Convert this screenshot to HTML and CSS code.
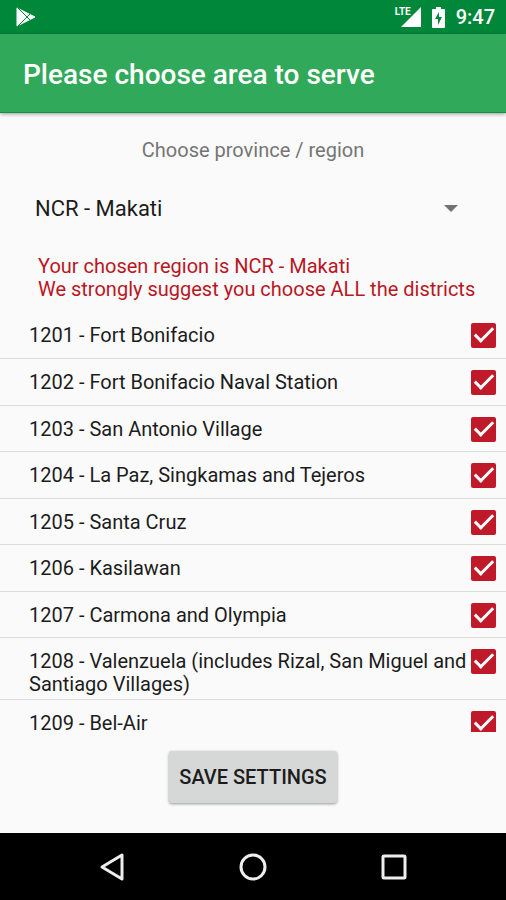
FILE: index.html
```html
<!DOCTYPE html>
<html lang="en">
<head>
<meta charset="utf-8">
<meta name="viewport" content="width=device-width, initial-scale=1">
<title>Please choose area to serve</title>
<link rel="stylesheet" href="styles.css">
</head>
<body>
<div class="screen">
  <div class="status-bar">
    <svg class="play-icon" width="20" height="20" viewBox="0 0 20 20" aria-hidden="true">
      <path d="M1 1 L19 10 L1 19 Z" fill="#fff" stroke="#fff" stroke-linejoin="round"/>
      <path d="M2 1 L14 13 M2 19 L14 7" stroke="#01873a" stroke-width="1" fill="none"/>
    </svg>
    <div class="status-right">
      <div class="signal">
        <span class="lte">LTE</span>
        <svg width="20" height="20" viewBox="0 0 20 20" aria-hidden="true"><path d="M20 0 V20 H0 Z" fill="#fff"/></svg>
      </div>
      <svg width="13" height="21" viewBox="0 0 13 21" aria-hidden="true">
        <path d="M4 0 H9 V2 H12 Q13 2 13 3 V20 Q13 21 12 21 H1 Q0 21 0 20 V3 Q0 2 1 2 H4 Z" fill="#fff"/>
        <path d="M7 5 L3 12 H6 V18 L10 10 H7 Z" fill="#01873a"/>
      </svg>
      <span class="clock">9:47</span>
    </div>
  </div>

  <header class="app-bar"><h1>Please choose area to serve</h1></header>

  <main class="content">
    <label class="region-label" for="region">Choose province / region</label>
    <div class="spinner">
      <select id="region"><option>NCR - Makati</option></select>
      <svg class="caret" width="14" height="7" viewBox="0 0 14 7" aria-hidden="true"><path d="M0 0 H14 L7 7 Z" fill="#727272"/></svg>
    </div>
    <p class="notice">Your chosen region is NCR - Makati<br>We strongly suggest you choose ALL the districts</p>

    <ul class="districts">
      <li><label for="d1201">1201 - Fort Bonifacio</label><input type="checkbox" id="d1201" checked></li>
      <li><label for="d1202">1202 - Fort Bonifacio Naval Station</label><input type="checkbox" id="d1202" checked></li>
      <li><label for="d1203">1203 - San Antonio Village</label><input type="checkbox" id="d1203" checked></li>
      <li><label for="d1204">1204 - La Paz, Singkamas and Tejeros</label><input type="checkbox" id="d1204" checked></li>
      <li><label for="d1205">1205 - Santa Cruz</label><input type="checkbox" id="d1205" checked></li>
      <li><label for="d1206">1206 - Kasilawan</label><input type="checkbox" id="d1206" checked></li>
      <li><label for="d1207">1207 - Carmona and Olympia</label><input type="checkbox" id="d1207" checked></li>
      <li><label for="d1208">1208 - Valenzuela (includes Rizal, San Miguel and Santiago Villages)</label><input type="checkbox" id="d1208" checked></li>
      <li><label for="d1209">1209 - Bel-Air</label><input type="checkbox" id="d1209" checked></li>
    </ul>

    <div class="actions"><button class="save" type="button">SAVE SETTINGS</button></div>
  </main>

  <nav class="nav-bar" aria-label="System">
    <button type="button" aria-label="Back"><svg width="28" height="30" viewBox="0 0 28 30"><path d="M24 3 V27 L4 15 Z" fill="none" stroke="#eee" stroke-width="3" stroke-linejoin="round"/></svg></button>
    <button type="button" aria-label="Home"><svg width="28" height="30" viewBox="0 0 28 30"><circle cx="14" cy="15" r="12" fill="none" stroke="#eee" stroke-width="3"/></svg></button>
    <button type="button" aria-label="Recent apps"><svg width="28" height="30" viewBox="0 0 28 30"><rect x="3" y="4" width="22" height="22" rx="1" fill="none" stroke="#eee" stroke-width="3"/></svg></button>
  </nav>
</div>
</body>
</html>
```
FILE: styles.css
```css
*,
*::before {
  box-sizing: border-box;
}

body {
  margin: 0;
  background: #fafafa;
  color: #1c1c1c;
  font-family: Roboto, "Liberation Sans", sans-serif;
  font-size: 20px;
  line-height: 23px;
}

button,
select {
  font-family: inherit;
}

.screen {
  display: flex;
  flex-direction: column;
  height: 100vh;
}

.status-bar {
  display: flex;
  flex: none;
  align-items: center;
  justify-content: space-between;
  height: 34px;
  padding: 0 11px 0 16px;
  background: #01873a;
  color: #fff;
}

.status-right {
  display: flex;
  align-items: center;
  gap: 11px;
}

.signal {
  display: flex;
  position: relative;
  padding-left: 6px;
}

.lte {
  position: absolute;
  top: 0;
  left: 0;
  font-size: 10px;
  font-weight: 700;
  line-height: 10px;
}

.clock {
  font-weight: 500;
}

.app-bar {
  display: flex;
  flex: none;
  align-items: center;
  height: 79px;
  padding: 4px 23px 0;
  border-bottom: 1px solid #0d9447;
  background: #31a95a;
  box-shadow: 0 1px 4px rgba(0, 0, 0, 0.4);
  color: #fff;
}

.app-bar h1 {
  margin: 0;
  font-size: 28px;
  font-weight: 500;
  line-height: 34px;
}

.content {
  display: flex;
  flex: 1;
  flex-direction: column;
  min-height: 0;
}

.region-label {
  padding-top: 26px;
  color: #757575;
  text-align: center;
}

.spinner {
  display: flex;
  position: relative;
  align-items: center;
  height: 46px;
  margin: 23px 24px 24px;
}

.spinner select {
  width: 100%;
  height: 100%;
  padding: 0 11px;
  border: 0;
  appearance: none;
  background: transparent;
  color: #1c1c1c;
  font-size: 22px;
}

.caret {
  position: absolute;
  right: 24px;
  pointer-events: none;
}

.notice {
  margin: 0;
  padding: 0 0 11px 38px;
  color: #b91724;
}

.districts {
  flex: 1;
  min-height: 0;
  margin: 0;
  padding: 0;
  overflow: hidden;
  list-style: none;
}

.districts li {
  display: flex;
  align-items: flex-start;
  justify-content: space-between;
  min-height: 46px;
  padding: 12px 10px 3px 29px;
  border-bottom: 1px solid #dcdcdc;
}

.districts li:first-child,
.districts li:nth-child(even) {
  min-height: 47px;
}

.districts label {
  flex: 1;
}

.districts input {
  position: relative;
  flex: none;
  width: 25px;
  height: 25px;
  margin: -1px 0 0 4px;
  border-radius: 2px;
  appearance: none;
  background: #c01a2a;
}

.districts input:checked::before {
  position: absolute;
  top: 0;
  left: 8px;
  width: 10px;
  height: 19px;
  border: solid #fff;
  border-width: 0 3px 3px 0;
  content: "";
  transform: rotate(45deg);
}

.actions {
  display: flex;
  flex: none;
  justify-content: center;
  padding: 19px 0 30px;
}

.save {
  height: 52px;
  padding: 0 10px;
  border: 0;
  border-radius: 3px;
  background: #d6d8d7;
  box-shadow: 0 1px 3px rgba(0, 0, 0, 0.4);
  color: #1c1c1c;
  font-size: 20px;
  font-weight: 500;
}

.nav-bar {
  display: flex;
  flex: none;
  align-items: center;
  justify-content: center;
  gap: 113px;
  height: 67px;
  background: #000;
}

.nav-bar button {
  display: flex;
  padding: 0;
  border: 0;
  background: none;
}
```
